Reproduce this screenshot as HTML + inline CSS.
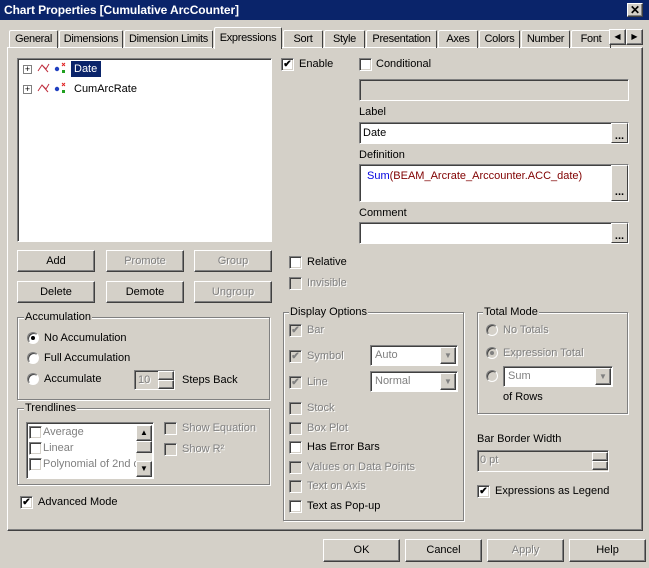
<!DOCTYPE html><html><head><style>
*{box-sizing:border-box;margin:0;padding:0}
body{width:649px;height:568px;background:#d4d0c8;font:11px "Liberation Sans",sans-serif;color:#000;position:relative;overflow:hidden}
div,span{position:absolute}
.t{white-space:nowrap;line-height:13px}
.d{color:#808080;text-shadow:1px 1px #fff}
.cb{width:13px;height:13px;background:#fff;border:1px solid;border-color:#808080 #fff #fff #808080;box-shadow:inset 1px 1px #404040,inset -1px -1px #d4d0c8;font-size:10px;line-height:11px;text-align:center;font-weight:bold}
.cb.g{background:#d4d0c8;color:#808080}
.rb{width:12px;height:12px;border-radius:50%;background:#fff;border:1px solid;border-color:#808080 #fff #fff #808080;box-shadow:inset 1px 1px #404040}
.rb.g{background:#d4d0c8}
.rb i{position:absolute;left:3px;top:3px;width:4px;height:4px;border-radius:50%;background:#000}
.btn{border:1px solid;border-color:#fff #404040 #404040 #fff;box-shadow:inset -1px -1px #808080;text-align:center;line-height:20px}
.in{background:#fff;border:1px solid;border-color:#808080 #fff #fff #808080;box-shadow:inset 1px 1px #404040}
.grp{border:1px solid #808080;box-shadow:1px 1px #fff,inset 1px 1px #fff}
.gl{background:#d4d0c8;padding:0 1px;top:-7px;left:6px}
.tab{top:30px;height:18px;border:1px solid;border-bottom:none;border-color:#fff #404040 #404040 #fff;text-align:center;line-height:16px;border-radius:2px 2px 0 0;letter-spacing:-0.3px;white-space:nowrap;overflow:hidden}
.dots{right:0;top:0;width:17px;bottom:0;background:#d4d0c8;border:1px solid;border-color:#fff #404040 #404040 #fff;font-weight:bold;line-height:8px;text-align:center;padding-top:8px}
</style></head><body>
<div style="left:0;top:0;width:649px;height:20px;background:#0a246a"></div>
<div class="t" style="left:4px;top:4px;color:#fff;font-weight:bold;font-size:12px;letter-spacing:-0.1px">Chart Properties [Cumulative ArcCounter]</div>
<div class="btn" style="left:627px;top:3px;width:16px;height:14px;background:#d4d0c8;line-height:12px;font-weight:bold;font-size:12px">✕</div>

<div style="left:7px;top:47px;width:636px;height:484px;border:1px solid;border-color:#fff #404040 #404040 #fff;box-shadow:inset -1px -1px #808080"></div>
<div class="tab" style="left:9px;width:49px">General</div>
<div class="tab" style="left:59px;width:64px">Dimensions</div>
<div class="tab" style="left:124px;width:89px">Dimension Limits</div>
<div class="tab" style="left:214px;top:27px;height:22px;width:68px;background:#d4d0c8;line-height:20px;z-index:2">Expressions</div>
<div class="tab" style="left:283px;width:40px">Sort</div>
<div class="tab" style="left:324px;width:41px">Style</div>
<div class="tab" style="left:366px;width:71px">Presentation</div>
<div class="tab" style="left:438px;width:40px">Axes</div>
<div class="tab" style="left:479px;width:41px">Colors</div>
<div class="tab" style="left:521px;width:49px">Number</div>
<div class="tab" style="left:571px;width:40px">Font</div>
<div class="btn" style="left:609px;top:29px;width:17px;height:16px;background:#d4d0c8;line-height:14px;font-size:8px">◀</div>
<div class="btn" style="left:626px;top:29px;width:17px;height:16px;background:#d4d0c8;line-height:14px;font-size:8px">▶</div>

<div class="in" style="left:17px;top:58px;width:255px;height:184px"></div>
<div style="left:23px;top:65px;width:9px;height:9px;border:1px solid #808080;background:#fff;font-size:9px;line-height:7px;text-align:center">+</div>
<div style="left:23px;top:85px;width:9px;height:9px;border:1px solid #808080;background:#fff;font-size:9px;line-height:7px;text-align:center">+</div>
<svg style="position:absolute;left:37px;top:61px" width="32" height="40"><path d="M1 10 L5 4 L9 8 L12 3 M5 4 L11 11" stroke="#c03040" fill="none"/><circle cx="20" cy="8" r="2.2" fill="#2040c0"/><rect x="25" y="9" width="3" height="3" fill="#20a020"/><path d="M25 2l3 3M28 2l-3 3" stroke="#e02020"/><g transform="translate(0,20)"><path d="M1 10 L5 4 L9 8 L12 3 M5 4 L11 11" stroke="#c03040" fill="none"/><circle cx="20" cy="8" r="2.2" fill="#2040c0"/><rect x="25" y="9" width="3" height="3" fill="#20a020"/><path d="M25 2l3 3M28 2l-3 3" stroke="#e02020"/></g></svg>
<div class="t" style="left:71px;top:61px;height:16px;width:30px;background:#0a246a;color:#fff;line-height:16px;padding-left:3px">Date</div>
<div class="t" style="left:74px;top:83px">CumArcRate</div>

<div class="cb" style="left:281px;top:58px">✔</div><div class="t" style="left:299px;top:58px">Enable</div>
<div class="cb" style="left:359px;top:58px"></div><div class="t" style="left:376px;top:58px">Conditional</div>
<div class="in" style="left:359px;top:79px;width:270px;height:22px;background:#d4d0c8"></div>
<div class="t" style="left:359px;top:106px">Label</div>
<div class="in" style="left:359px;top:122px;width:270px;height:22px"><div class="t" style="left:3px;top:4px">Date</div><div class="dots">...</div></div>
<div class="t" style="left:359px;top:149px">Definition</div>
<div class="in" style="left:359px;top:164px;width:270px;height:38px"><div class="t" style="left:7px;top:5px;color:#800000"><span style="position:static;color:#0000e0">Sum</span>(BEAM_Arcrate_Arccounter.ACC_date)</div><div class="dots" style="padding-top:22px">...</div></div>
<div class="t" style="left:359px;top:207px">Comment</div>
<div class="in" style="left:359px;top:222px;width:270px;height:22px"><div class="dots">...</div></div>

<div class="btn" style="left:17px;top:250px;width:78px;height:22px">Add</div>
<div class="btn d" style="left:106px;top:250px;width:78px;height:22px">Promote</div>
<div class="btn d" style="left:194px;top:250px;width:78px;height:22px">Group</div>
<div class="btn" style="left:17px;top:281px;width:78px;height:22px">Delete</div>
<div class="btn" style="left:106px;top:281px;width:78px;height:22px">Demote</div>
<div class="btn d" style="left:194px;top:281px;width:78px;height:22px">Ungroup</div>
<div class="cb" style="left:289px;top:256px"></div><div class="t" style="left:307px;top:256px">Relative</div>
<div class="cb g" style="left:289px;top:277px"></div><div class="t d" style="left:307px;top:277px">Invisible</div>

<div class="grp" style="left:17px;top:317px;width:253px;height:83px"><div class="t gl">Accumulation</div></div>
<div class="rb" style="left:27px;top:332px"><i></i></div><div class="t" style="left:44px;top:332px">No Accumulation</div>
<div class="rb" style="left:27px;top:352px"></div><div class="t" style="left:44px;top:352px">Full Accumulation</div>
<div class="rb" style="left:27px;top:373px"></div><div class="t" style="left:44px;top:373px">Accumulate</div>
<div class="in" style="left:134px;top:370px;width:41px;height:20px;background:#d4d0c8"><div class="t d" style="left:3px;top:3px">10</div></div>
<div class="btn" style="left:158px;top:371px;width:16px;height:9px;background:#d4d0c8"></div>
<div class="btn" style="left:158px;top:380px;width:16px;height:9px;background:#d4d0c8"></div>
<div class="t" style="left:182px;top:374px">Steps Back</div>

<div class="grp" style="left:17px;top:408px;width:253px;height:77px"><div class="t gl">Trendlines</div></div>
<div class="in" style="left:26px;top:422px;width:128px;height:57px;overflow:hidden">
<div class="cb g" style="left:2px;top:3px;background:#fff"></div><div class="t d" style="left:16px;top:3px;text-shadow:none">Average</div>
<div class="cb g" style="left:2px;top:19px;background:#fff"></div><div class="t d" style="left:16px;top:19px;text-shadow:none">Linear</div>
<div class="cb g" style="left:2px;top:35px;background:#fff"></div><div class="t d" style="left:16px;top:35px;text-shadow:none">Polynomial of 2nd de</div>
<div style="left:109px;top:2px;width:16px;height:52px;background:#e8e6e0"></div>
<div class="btn" style="left:109px;top:2px;width:16px;height:16px;background:#d4d0c8;font-size:8px;line-height:14px">▲</div>
<div class="btn" style="left:109px;top:18px;width:16px;height:12px;background:#d4d0c8"></div>
<div class="btn" style="left:109px;top:38px;width:16px;height:16px;background:#d4d0c8;font-size:8px;line-height:14px">▼</div>
</div>
<div class="cb g" style="left:164px;top:422px"></div><div class="t d" style="left:182px;top:422px">Show Equation</div>
<div class="cb g" style="left:164px;top:443px"></div><div class="t d" style="left:182px;top:443px">Show R²</div>
<div class="cb" style="left:20px;top:496px">✔</div><div class="t" style="left:38px;top:496px">Advanced Mode</div>

<div class="grp" style="left:283px;top:312px;width:181px;height:209px"><div class="t gl" style="left:5px">Display Options</div></div>
<div class="cb g" style="left:289px;top:324px">✔</div><div class="t d" style="left:307px;top:324px">Bar</div>
<div class="cb g" style="left:289px;top:350px">✔</div><div class="t d" style="left:307px;top:350px">Symbol</div>
<div class="cb g" style="left:289px;top:376px">✔</div><div class="t d" style="left:307px;top:376px">Line</div>
<div class="in" style="left:370px;top:345px;width:88px;height:21px"><div class="t d" style="left:4px;top:3px;text-shadow:none">Auto</div><div class="btn" style="right:1px;top:1px;width:16px;height:17px;background:#d4d0c8;color:#808080;font-size:8px;line-height:15px">▼</div></div>
<div class="in" style="left:370px;top:371px;width:88px;height:21px"><div class="t d" style="left:4px;top:3px;text-shadow:none">Normal</div><div class="btn" style="right:1px;top:1px;width:16px;height:17px;background:#d4d0c8;color:#808080;font-size:8px;line-height:15px">▼</div></div>
<div class="cb g" style="left:289px;top:402px"></div><div class="t d" style="left:307px;top:402px">Stock</div>
<div class="cb g" style="left:289px;top:422px"></div><div class="t d" style="left:307px;top:422px">Box Plot</div>
<div class="cb" style="left:289px;top:441px"></div><div class="t" style="left:307px;top:441px">Has Error Bars</div>
<div class="cb g" style="left:289px;top:461px"></div><div class="t d" style="left:307px;top:461px">Values on Data Points</div>
<div class="cb g" style="left:289px;top:480px"></div><div class="t d" style="left:307px;top:480px">Text on Axis</div>
<div class="cb" style="left:289px;top:500px"></div><div class="t" style="left:307px;top:500px">Text as Pop-up</div>

<div class="grp" style="left:477px;top:312px;width:151px;height:102px"><div class="t gl" style="left:5px">Total Mode</div></div>
<div class="rb g" style="left:486px;top:324px"></div><div class="t d" style="left:503px;top:324px">No Totals</div>
<div class="rb g" style="left:486px;top:347px"><i style="background:#808080"></i></div><div class="t d" style="left:503px;top:347px">Expression Total</div>
<div class="rb g" style="left:486px;top:370px"></div>
<div class="in" style="left:503px;top:366px;width:110px;height:21px"><div class="t d" style="left:4px;top:3px;text-shadow:none">Sum</div><div class="btn" style="right:1px;top:1px;width:16px;height:17px;background:#d4d0c8;color:#808080;font-size:8px;line-height:15px">▼</div></div>
<div class="t" style="left:503px;top:391px">of Rows</div>

<div class="t" style="left:477px;top:433px">Bar Border Width</div>
<div class="in" style="left:477px;top:450px;width:132px;height:22px;background:#d4d0c8"><div class="t d" style="left:2px;top:3px">0 pt</div></div>
<div class="btn" style="left:592px;top:452px;width:16px;height:9px;background:#d4d0c8"></div>
<div class="btn" style="left:592px;top:461px;width:16px;height:9px;background:#d4d0c8"></div>
<div class="cb" style="left:477px;top:485px">✔</div><div class="t" style="left:495px;top:485px">Expressions as Legend</div>

<div class="btn" style="left:323px;top:539px;width:77px;height:23px">OK</div>
<div class="btn" style="left:405px;top:539px;width:77px;height:23px">Cancel</div>
<div class="btn d" style="left:487px;top:539px;width:77px;height:23px">Apply</div>
<div class="btn" style="left:569px;top:539px;width:77px;height:23px">Help</div>
</body></html>
